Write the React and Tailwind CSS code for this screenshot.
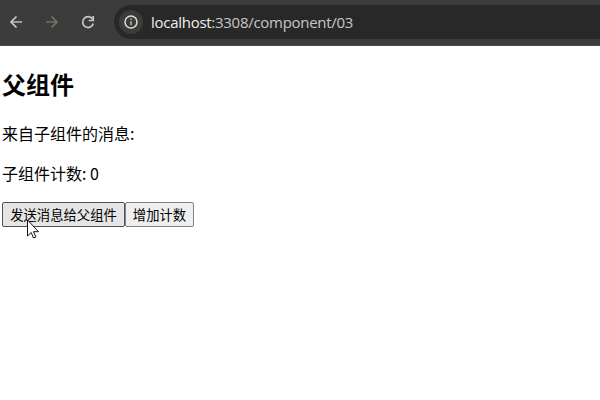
function Toolbar() {
  return (
    <header className="flex h-[46px] shrink-0 border-b border-[#4b4b4b] bg-[#3c3c3c]">
      <div className="flex h-11 w-[114px] shrink-0 items-center gap-4 pl-1.5">
        <svg className="size-5" viewBox="0 0 20 20" fill="none" strokeWidth="1.7">
          <path d="M5 10h11" stroke="#b5ada0" />
          <path d="M10.5 4.5 5 10l5.500 5.500" stroke="#c3cbcb" />
        </svg>
        <svg className="size-5" viewBox="0 0 20 20" fill="none" strokeWidth="1.6">
          <path d="M4 10h11" stroke="#7d6b50" />
          <path d="M9.500 4.500 15 10l-5.500 5.500" stroke="#77766e" />
        </svg>
        <svg className="size-5" viewBox="0 0 20 20" fill="none" stroke="#c6cbc8" strokeWidth="1.7">
          <path d="M15.300 11.500A5.400 5.400 0 1 1 14.500 7" />
          <path d="M15.200 4v4.500h-4.500" />
        </svg>
      </div>
      <div className="mt-[5px] flex h-[34px] flex-1 items-center rounded-l-full bg-[#282828] pl-[5px]">
        <span className="flex size-6 items-center justify-center rounded-full bg-[#3c3c3c]">
          <svg className="size-4" viewBox="0 0 16 16" fill="none" stroke="#dedbd0" strokeWidth="1.5">
            <circle cx="8" cy="8" r="6" />
            <path d="M8 7.200v4M8 4.600v1.500" stroke="#b9b5a8" />
          </svg>
        </span>
        <span className="ml-2 pb-px font-['Open_Sans','Noto_Sans_CJK_SC',sans-serif] text-[15px] leading-5 tracking-[-0.28px] whitespace-nowrap text-[#c7c7c7]">
          <span className="text-[#f0f0f0]">localhost</span>:3308/component/03
        </span>
      </div>
    </header>
  );
}

export default function App() {
  return (
    <div className="flex h-[400px] w-[600px] flex-col overflow-hidden bg-white font-['Noto_Sans_CJK_SC',sans-serif] text-black">
      <Toolbar />
      <main className="relative flex flex-col items-start pl-0.5">
        <h2 className="mt-5 text-2xl leading-9 font-bold">父组件</h2>
        <p className="mt-[19px] text-base leading-6">来自子组件的消息:</p>
        <p className="mt-4 text-base leading-6">子组件计数: 0</p>
        <div className="mt-[17px] flex">
          <button className="h-[25px] w-[123px] rounded-[2px] border border-[#4f5357] bg-[#e5e5e5] text-[13.333px] leading-[21px] whitespace-nowrap">发送消息给父组件</button>
          <button className="h-[25px] w-[69px] rounded-[2px] border border-[#7b8288] bg-[#efefef] text-[13.333px] leading-[21px] whitespace-nowrap">增加计数</button>
        </div>
        <svg className="absolute top-[173px] left-[27px] h-5 w-3" viewBox="0 0 12 20" fill="white" stroke="#111" strokeWidth="1">
          <path d="M.5 1v16l3.700-3.500 2.300 5.500 2.400-1-2.400-5.300h5z" />
        </svg>
      </main>
    </div>
  );
}
